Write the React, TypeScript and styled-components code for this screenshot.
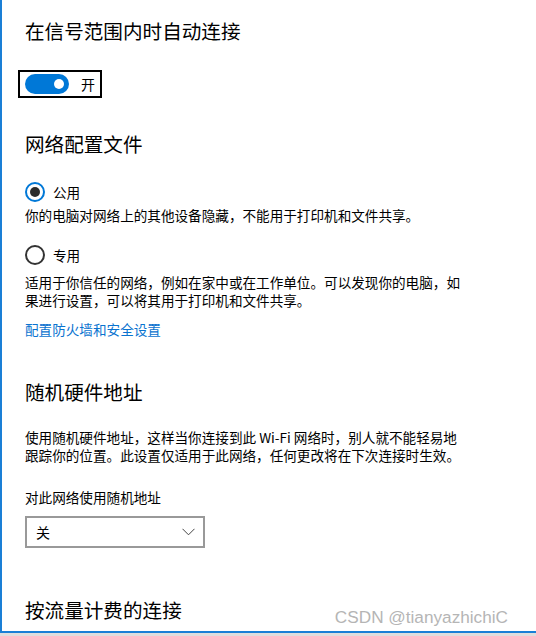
import React from "react";
import styled, { createGlobalStyle } from "styled-components";

const Global = createGlobalStyle`
  html, body { margin: 0; padding: 0; background: #ffffff; }
  body {
    font-family: "Noto Sans CJK SC", "Noto Sans", sans-serif;
    color: #000;
    -webkit-font-smoothing: antialiased;
  }
`;

const Page = styled.div`
  width: 536px;
  height: 636px;
  display: flex;
  flex-direction: column;
  overflow: hidden;
`;

const Frame = styled.div`
  position: relative;
  height: 631px;
  flex: none;
  border-left: 2px solid #1a7fd6;
  border-bottom: 2px solid #1a7fd6;
  background: #fff;
  overflow: hidden;
  box-sizing: content-box;
`;

const Strip = styled.div`
  flex: 1;
  background: #dedede;
`;

const Content = styled.div`
  padding: 17px 0 0 23px;
  display: flex;
  flex-direction: column;
  align-items: flex-start;
`;

const Heading = styled.h2<{ $mt?: number }>`
  margin: ${(p) => p.$mt ?? 0}px 0 0 0;
  font-size: 19.6px;
  line-height: 28px;
  font-weight: 400;
  white-space: nowrap;
`;

const FocusBox = styled.div`
  margin: 25px 0 0 -7px;
  width: 84px;
  height: 28px;
  box-sizing: border-box;
  border: 2px solid #000;
  padding: 0 0 0 5px;
  display: flex;
  align-items: center;
  gap: 12px;
`;

const Track = styled.div<{ $on: boolean }>`
  position: relative;
  width: 44px;
  height: 20px;
  border-radius: 10px;
  background: ${(p) => (p.$on ? "#0078d7" : "#fff")};
  flex: none;
`;

const Knob = styled.span`
  position: absolute;
  right: 5px;
  top: 5px;
  width: 10px;
  height: 10px;
  border-radius: 50%;
  background: #fff;
`;

const ToggleLabel = styled.span`
  font-size: 14px;
  line-height: 20px;
`;

const RadioRow = styled.label<{ $mt: number }>`
  margin-top: ${(p) => p.$mt}px;
  display: flex;
  align-items: center;
  gap: 8px;
  height: 20px;
  font-size: 13.6px;
`;

const RadioCircle = styled.span<{ $checked: boolean }>`
  width: 20px;
  height: 20px;
  box-sizing: border-box;
  border-radius: 50%;
  border: 2px solid ${(p) => (p.$checked ? "#0078d7" : "#333")};
  display: flex;
  align-items: center;
  justify-content: center;
  flex: none;
  &::after {
    content: "";
    display: ${(p) => (p.$checked ? "block" : "none")};
    width: 10px;
    height: 10px;
    border-radius: 50%;
    background: #2b2b2b;
  }
`;

const Para = styled.p<{ $mt: number }>`
  margin: ${(p) => p.$mt}px 0 0 0;
  font-size: 13.6px;
  line-height: 18.6px;
  white-space: nowrap;
`;

const Link = styled.a`
  margin-top: 10px;
  font-size: 13.6px;
  line-height: 19px;
  color: #0a73cf;
  text-decoration: none;
`;

const Select = styled.div`
  margin-top: 9px;
  width: 180px;
  height: 32px;
  box-sizing: border-box;
  border: 2px solid #999;
  display: flex;
  align-items: center;
  justify-content: space-between;
  padding: 0 8px 0 9px;
  font-size: 14px;
`;

const Watermark = styled.div`
  position: absolute;
  right: 28px;
  bottom: 4px;
  font-family: "Liberation Sans", Arial, sans-serif;
  font-size: 17.2px;
  line-height: 20px;
  color: #b5b5b5;
  white-space: nowrap;
`;

const Chevron = () => (
  <svg width="13" height="8" viewBox="0 0 13 8" fill="none">
    <path d="M0.5 0.8 L6.5 6.8 L12.5 0.8" stroke="#444" strokeWidth="1" />
  </svg>
);

export default function App() {
  return (
    <Page>
      <Global />
      <Frame>
        <Content>
          <Heading>在信号范围内时自动连接</Heading>
          <FocusBox>
            <Track $on>
              <Knob />
            </Track>
            <ToggleLabel>开</ToggleLabel>
          </FocusBox>

          <Heading $mt={32}>网络配置文件</Heading>
          <RadioRow $mt={24}>
            <RadioCircle $checked />
            公用
          </RadioRow>
          <Para $mt={4}>你的电脑对网络上的其他设备隐藏，不能用于打印机和文件共享。</Para>
          <RadioRow $mt={20}>
            <RadioCircle $checked={false} />
            专用
          </RadioRow>
          <Para $mt={8}>
            适用于你信任的网络，例如在家中或在工作单位。可以发现你的电脑，如
            <br />
            果进行设置，可以将其用于打印机和文件共享。
          </Para>
          <Link href="#">配置防火墙和安全设置</Link>

          <Heading $mt={39}>随机硬件地址</Heading>
          <Para $mt={22}>
            使用随机硬件地址，这样当你连接到此 Wi-Fi 网络时，别人就不能轻易地
            <br />
            跟踪你的位置。此设置仅适用于此网络，任何更改将在下次连接时生效。
          </Para>
          <Para $mt={23}>对此网络使用随机地址</Para>
          <Select>
            <span>关</span>
            <Chevron />
          </Select>

          <Heading $mt={48}>按流量计费的连接</Heading>
        </Content>
        <Watermark>CSDN @tianyazhichiC</Watermark>
      </Frame>
      <Strip />
    </Page>
  );
}
